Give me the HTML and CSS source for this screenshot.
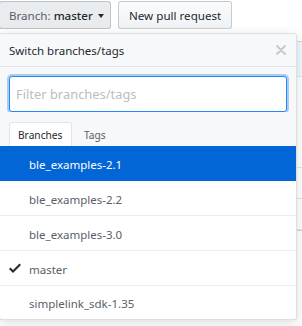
FILE: index.html
```html
<!DOCTYPE html>
<html>
<head>
<meta charset="utf-8">
<link rel="stylesheet" href="styles.css">
</head>
<body>
<div class="page">
  <div class="toolbar">
    <button class="btn btn-branch"><span class="muted">Branch:</span>&nbsp;<span class="strong">master</span><span class="caret"></span></button>
    <button class="btn btn-pr">New pull request</button>
  </div>
  <div class="behind">
    <div class="behind-row r1"></div>
    <div class="behind-row r2"></div>
    <div class="behind-row r3"></div>
    <div class="behind-row r4"></div>
  </div>

  <div class="menu">
    <div class="menu-header">
      <span class="menu-title">Switch branches/tags</span>
      <svg class="close" width="10" height="10" viewBox="0 0 10 10"><path d="M1 1L9 9M9 1L1 9" stroke="#c4c8cc" stroke-width="1.8" stroke-linecap="round"/></svg>
    </div>
    <div class="menu-filter">
      <input class="filter-input" type="text" placeholder="Filter branches/tags" autofocus>
    </div>
    <div class="menu-tabs">
      <span class="tab tab-active">Branches</span>
      <span class="tab">Tags</span>
    </div>
    <div class="menu-list">
      <div class="item item-selected"><span class="check"></span><span>ble_examples-2.1</span></div>
      <div class="item"><span class="check"></span><span>ble_examples-2.2</span></div>
      <div class="item"><span class="check"></span><span>ble_examples-3.0</span></div>
      <div class="item"><span class="check"><svg width="12" height="16" viewBox="0 0 12 16"><path d="M12 5l-8 8-4-4 1.5-1.5L4 10l6.5-6.5L12 5z" fill="#24292e"/></svg></span><span>master</span></div>
      <div class="item item-last"><span class="check"></span><span>simplelink_sdk-1.35</span></div>
    </div>
  </div>
</div>
</body>
</html>
```

FILE: styles.css
```css
html, body {
  margin: 0;
  padding: 0;
  background: #fff;
}
body {
  font-family: "Noto Sans", "Liberation Sans", sans-serif;
  color: #24292e;
}
.page {
  position: relative;
  width: 302px;
  height: 326px;
  overflow: hidden;
}
.toolbar {
  display: flex;
  gap: 7px;
  padding-top: 1px;
  margin-left: -1px;
}
.btn {
  height: 28px;
  box-sizing: border-box;
  border: 1px solid rgba(27, 31, 35, 0.2);
  border-radius: 3px;
  font-family: inherit;
  font-size: 11.6px;
  display: flex;
  align-items: center;
  color: #24292e;
  margin: 0;
}
.btn-branch {
  width: 112px;
  padding: 0 0 0 9px;
  background: #e9ecef;
}
.btn-pr {
  width: 114px;
  padding: 0 0 0 10px;
  background: linear-gradient(#fafbfc, #eff3f6);
}
.muted { color: #586069; }
.strong { color: #24292e; font-weight: 500; }
.caret {
  display: inline-block;
  width: 0;
  height: 0;
  margin-left: 5px;
  margin-top: 1px;
  border-left: 3.5px solid transparent;
  border-right: 3.5px solid transparent;
  border-top: 4px solid #24292e;
}
.behind {
  margin-left: 240px;
  margin-top: 12px;
  width: 120px;
  border: 1px solid #d1d5da;
  border-radius: 3px;
}
.behind-row {
  height: 30px;
  border-bottom: 1px solid #e1e4e8;
}
.behind-row.r1 { background: #f1f8ff; height: 34px; }
.behind-row.r2 { height: 90px; }
.menu {
  position: absolute;
  top: 33px;
  left: -1px;
  width: 298px;
  box-sizing: border-box;
  background: #fff;
  border: 1px solid rgba(27, 31, 35, 0.15);
  border-radius: 3px;
  box-shadow: 0 3px 12px rgba(27, 31, 35, 0.15);
  overflow: hidden;
}
.menu-header {
  height: 32px;
  display: flex;
  align-items: center;
  justify-content: space-between;
  padding: 0 10px 0 9px;
  background: #f6f8fa;
  border-bottom: 1px solid #e1e4e8;
}
.menu-title {
  font-size: 11.5px;
  color: #24292e;
}
.menu-filter {
  background: #f6f8fa;
  padding: 9px 9px 0 9px;
}
.filter-input {
  display: block;
  width: 278px;
  height: 36px;
  box-sizing: border-box;
  margin: 0;
  padding: 0 6px;
  border: 1px solid #2188ff;
  border-radius: 3px;
  box-shadow: 0 0 0 2px rgba(3, 102, 214, 0.3);
  outline: none;
  font-family: inherit;
  font-size: 12.9px;
  color: #24292e;
  background: #fff;
}
.filter-input::placeholder {
  color: #b9bec4;
}
.menu-tabs {
  display: flex;
  background: #f6f8fa;
  padding: 10px 0 0 9px;
}
.tab {
  height: 24px;
  box-sizing: border-box;
  padding: 0 0 0 11px;
  border: 1px solid transparent;
  border-bottom: 0;
  font-size: 10.2px;
  display: flex;
  align-items: center;
  color: #586069;
}
.tab-active {
  width: 63px;
  padding-left: 8px;
  background: #fff;
  border-color: #e1e4e8;
  border-radius: 3px 3px 0 0;
  color: #24292e;
}
.item {
  height: 35px;
  box-sizing: border-box;
  display: flex;
  align-items: center;
  padding: 2px 0 0 9px;
  border-bottom: 1px solid #eaecef;
  font-size: 11.5px;
  color: #586069;
}
.item-selected {
  background: #0366d6;
  color: #fff;
  border-bottom-color: #0366d6;
}
.item-last {
  border-bottom: 0;
  height: 33px;
}
.check {
  width: 12px;
  height: 16px;
  margin-right: 8px;
  display: flex;
  margin-top: -2px;
}
```
